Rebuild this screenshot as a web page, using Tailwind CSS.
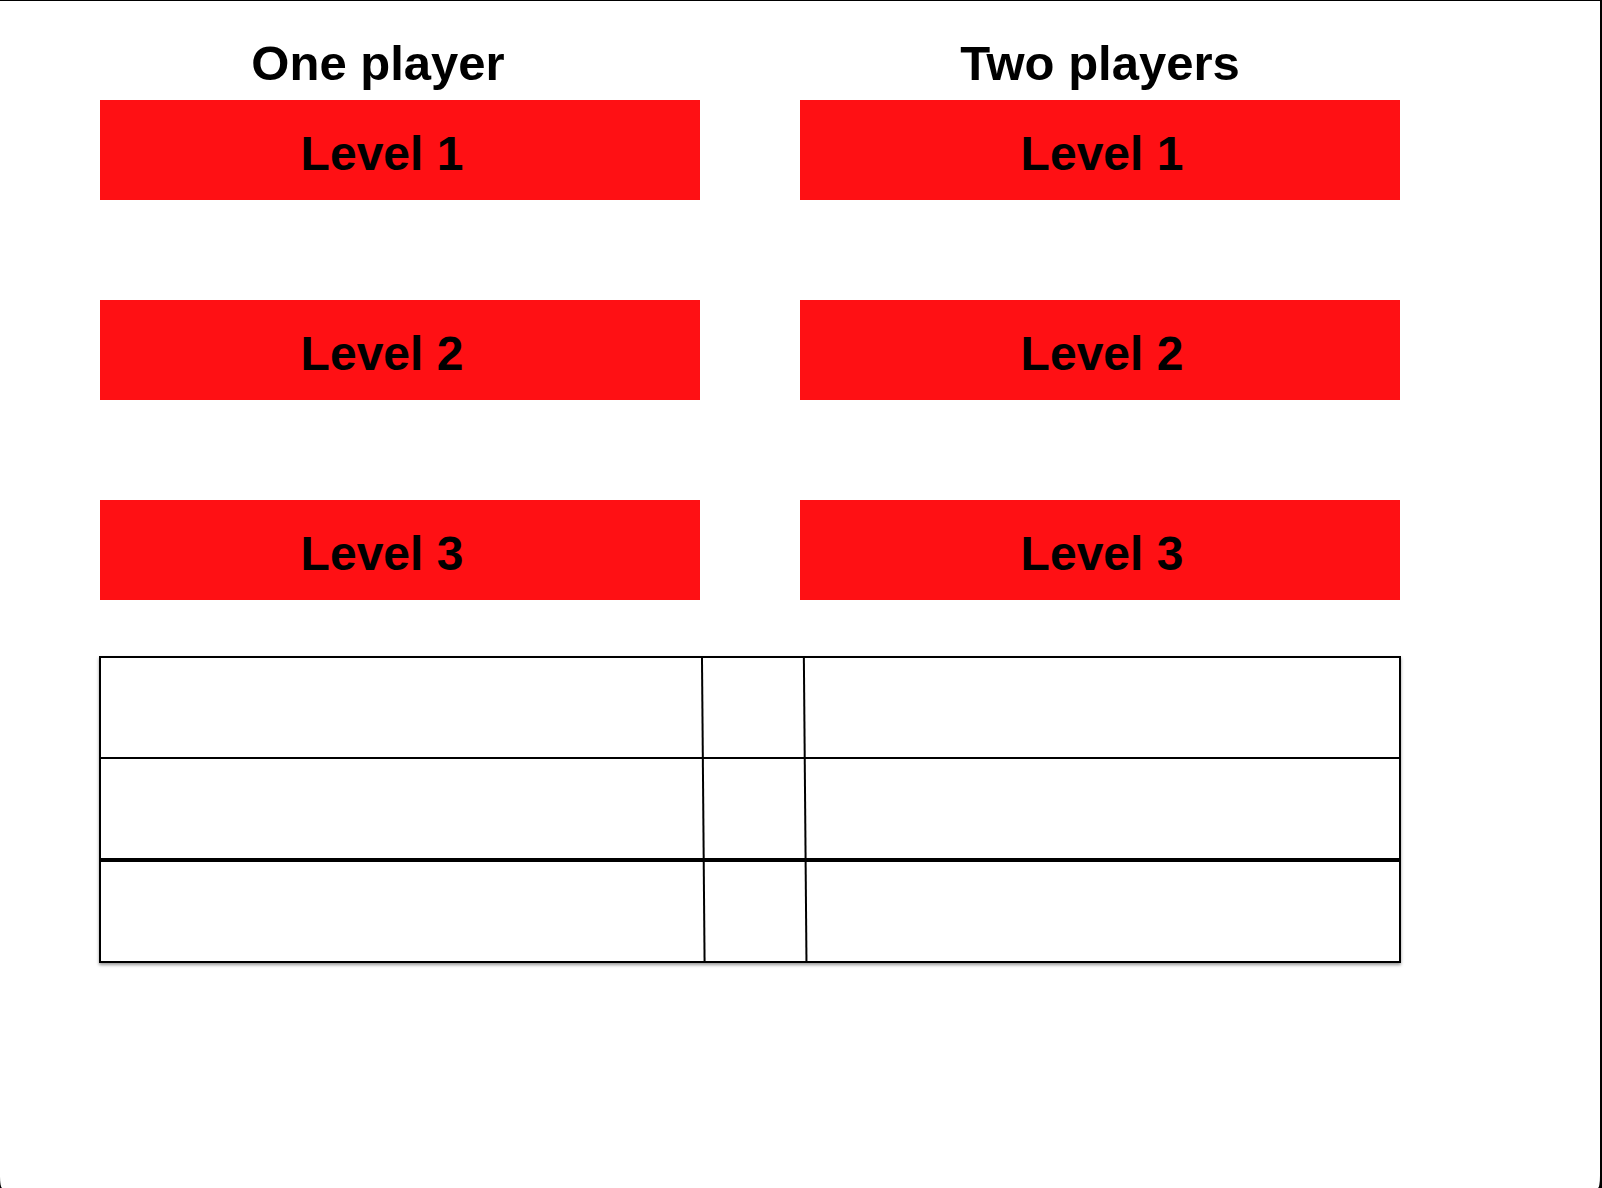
<!DOCTYPE html>
<html lang="en">
<head>
<meta charset="utf-8">
<meta name="viewport" content="width=device-width, initial-scale=1">
<title>Level select</title>
<script src="https://cdn.jsdelivr.net/npm/@tailwindcss/browser@4"></script>
</head>
<body class="flex min-h-screen flex-col bg-black pt-px pr-0.5 font-['Liberation_Sans',Arial,sans-serif] font-bold text-black">
<main class="grow rounded-b-[2px_12px] bg-white pt-[34px] pr-[200px] pb-12 pl-[100px]">
  <div class="grid grid-cols-2 gap-x-[100px]">
    <section aria-labelledby="one">
      <h2 id="one" class="mb-[9px] pr-11 text-center text-[49px] leading-[56px]">One player</h2>
      <div class="flex flex-col gap-[100px]">
        <button type="button" class="h-[100px] bg-[#ff1014] pt-2 pr-9 text-center text-[48px] leading-[56px]">Level 1</button>
        <button type="button" class="h-[100px] bg-[#ff1014] pt-2 pr-9 text-center text-[48px] leading-[56px]">Level 2</button>
        <button type="button" class="h-[100px] bg-[#ff1014] pt-2 pr-9 text-center text-[48px] leading-[56px]">Level 3</button>
      </div>
    </section>
    <section aria-labelledby="two">
      <h2 id="two" class="mb-[9px] text-center text-[49px] leading-[56px]">Two players</h2>
      <div class="flex flex-col gap-[100px]">
        <button type="button" class="h-[100px] bg-[#ff1014] pt-2 pl-1 text-center text-[48px] leading-[56px]">Level 1</button>
        <button type="button" class="h-[100px] bg-[#ff1014] pt-2 pl-1 text-center text-[48px] leading-[56px]">Level 2</button>
        <button type="button" class="h-[100px] bg-[#ff1014] pt-2 pl-1 text-center text-[48px] leading-[56px]">Level 3</button>
      </div>
    </section>
  </div>

  <!-- Empty score grid; the column rules lean slightly, so they are drawn over the rows -->
  <div class="relative -mx-px mt-14 border-2 border-black shadow-[0_2px_3px_rgba(0,0,0,0.4)]">
    <table class="w-full table-fixed border-separate border-spacing-0" aria-label="Scores">
      <tbody>
        <tr><td class="h-[101px] w-[46%] border-b-2 border-black p-0"></td><td class="border-b-2 border-black p-0"></td><td class="w-[46%] border-b-2 border-black p-0"></td></tr>
        <tr><td class="h-[103px] border-b-4 border-black p-0"></td><td class="border-b-4 border-black p-0"></td><td class="border-b-4 border-black p-0"></td></tr>
        <tr><td class="h-[99px] p-0"></td><td class="p-0"></td><td class="p-0"></td></tr>
      </tbody>
    </table>
    <svg class="absolute inset-0 h-full w-full" stroke="black" stroke-width="2" aria-hidden="true">
      <line x1="46.3%" y1="0" x2="46.5%" y2="100%"/>
      <line x1="54.15%" y1="0" x2="54.35%" y2="100%"/>
    </svg>
  </div>
</main>
</body>
</html>
